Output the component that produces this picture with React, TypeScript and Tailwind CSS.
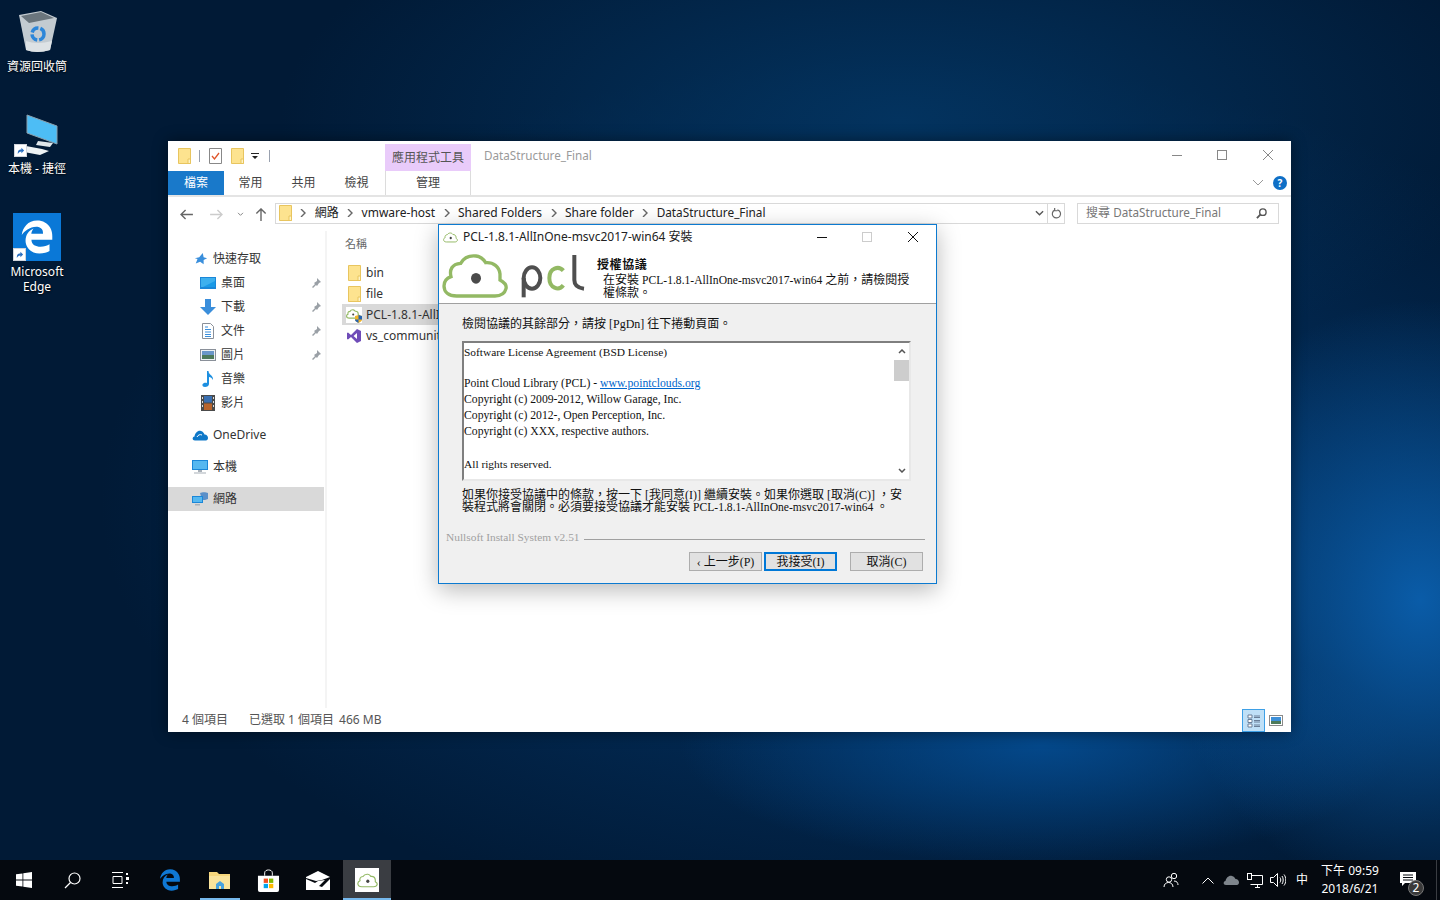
import React from 'react';
import { FaEdgeLegacy } from 'react-icons/fa6';

const UI_FONT = "font-['Noto_Sans','Noto_Sans_CJK_TC',sans-serif]";
const DLG_FONT = "font-['Liberation_Serif','Noto_Sans_CJK_TC',serif]";

const FolderIcon: React.FC<{ className?: string }> = ({ className = 'w-[13px] h-4' }) => (
    <svg viewBox="0 0 13 16" className={className}>
        <path d="M.5.5h12v15H.5z" fill="#fde38f" stroke="#e8c55f" />
        <path d="M10 11h2.500v4.500H10z" fill="#fff3c4" stroke="#e8c55f" />
    </svg>
);

const CloudPath = "M50 138C25 138 12 125 12 108 12 92 22 84 33 80 28 60 35 42 62 40 72 22 90 16 108 18 125 20 132 30 137 38 160 36 178 50 180 72 180 80 180 86 180 90 195 98 200 108 198 116 194 132 180 138 165 138Z";

const PclCloud: React.FC<{ className?: string; width?: number }> = ({ className, width = 14 }) => (
    <svg viewBox="4 10 202 136" className={className}>
        <path d={CloudPath} fill="none" stroke="#93b964" strokeWidth={width} />
        <ellipse cx="108" cy="85" rx="15" ry="16" fill="#444" />
    </svg>
);

const PinIcon = () => (
    <svg viewBox="0 0 12 12" className="w-3 h-3">
        <path d="M7 1l4 4-2 1-2 3-1-1-3 3-1-1 3-3-1-1 3-2z" fill="#9aa0a6" />
    </svg>
);

const ShortcutBadge = () => (
    <span className="absolute left-0 bottom-0 w-[13px] h-[13px] bg-white border border-gray-300 flex items-center justify-center">
        <svg viewBox="0 0 10 10" className="w-[9px] h-[9px]">
            <path d="M2 9c0-4 1-5 4-5V2l3 3-3 3V6C4 6 3 7 2 9z" fill="#2a6fc0" />
        </svg>
    </span>
);

const NavIcon: React.FC<{ kind: string }> = ({ kind }) => {
    switch (kind) {
        case 'star':
            return <svg viewBox="0 0 16 16" className="w-[14px] h-[14px]"><path d="M10 1l1 5 4 1-4 2 0 5-4-3-5 2 2-5-3-1 5-1z" fill="#3a8fdc" /></svg>;
        case 'desktop':
            return <svg viewBox="0 0 16 12" className="w-4 h-3"><rect width="16" height="12" fill="#1b87d8" /><path d="M1 1h14v9H1z" fill="#3db0ee" /><path d="M3 10h12V4z" fill="#1a9ae6" /></svg>;
        case 'download':
            return <svg viewBox="0 0 16 16" className="w-4 h-4"><path d="M5 0h6v8h5l-8 8-8-8h5z" fill="#3a8edb" /></svg>;
        case 'doc':
            return <svg viewBox="0 0 12 16" className="w-3 h-4"><path d="M.5.5h8l3 3v12H.5z" fill="#fff" stroke="#8a9099" /><path d="M3 4h3M3 6.500h6M3 9h6M3 11.500h6M3 13.500h6" stroke="#3a8edb" /></svg>;
        case 'picture':
            return <svg viewBox="0 0 16 12" className="w-4 h-3"><rect x=".5" y=".5" width="15" height="11" fill="#eef1f4" stroke="#8a9099" /><rect x="2" y="2" width="12" height="4" fill="#6a97c8" /><rect x="2" y="6" width="12" height="4" fill="#4d7a5a" /></svg>;
        case 'music':
            return <svg viewBox="0 0 12 16" className="w-3 h-4"><path d="M5 0h1.500c0 4 5 4 4.500 9-1-2-2.500-3-4-3v7c0 2-2 3-4 3-3 0-3.500-3-1-4 1-.5 2-.5 3 0z" fill="#1d8fe0" /></svg>;
        case 'video':
            return <svg viewBox="0 0 14 16" className="w-[14px] h-4"><rect width="14" height="16" fill="#4a4a4a" /><rect x="3" y="1" width="8" height="6.500" fill="#3a6fb0" /><rect x="3" y="8.500" width="8" height="6.500" fill="#b8642c" /><path d="M1 2h1v2H1zM1 6h1v2H1zM1 10h1v2H1zM12 2h1v2h-1zM12 6h1v2h-1zM12 10h1v2h-1z" fill="#ddd" /></svg>;
        case 'onedrive':
            return <svg viewBox="0 0 16 11" className="w-4 h-[11px]"><path d="M3 10.500C0 10.500 0 7 2.500 6.500 3 3 6 0 9 1c2 .5 3 2 3.500 3.500 2.500 0 3.500 2 3.500 3.500 0 1.500-1 2.500-2 2.500z" fill="#0f78c8" /><path d="M5 7c1-2 3-3 5-2" stroke="#fff" fill="none" /></svg>;
        case 'pc':
            return <svg viewBox="0 0 16 14" className="w-4 h-[14px]"><rect width="16" height="10" fill="#1b87d8" /><rect x="1" y="1" width="14" height="8" fill="#56b8f0" /><path d="M6 10h4v2H6zM2 12.500h12v1H2z" fill="#a8b0b8" /></svg>;
        default:
            return <svg viewBox="0 0 16 14" className="w-4 h-[14px]"><path d="M8 1c2-1 6-1 8 0v6c-2 1-4 1-6 1z" fill="#5a8fc8" /><rect y="4" width="11" height="7" fill="#1b87d8" /><rect x="1" y="5" width="9" height="5" fill="#56b8f0" /><path d="M3 12h5v1.500H3z" fill="#a8b0b8" /></svg>;
    }
};

const navItems = [
    { kind: 'desktop', label: '桌面', pin: true },
    { kind: 'download', label: '下載', pin: true },
    { kind: 'doc', label: '文件', pin: true },
    { kind: 'picture', label: '圖片', pin: true },
    { kind: 'music', label: '音樂', pin: false },
    { kind: 'video', label: '影片', pin: false },
];

const Sep = () => (
    <svg viewBox="0 0 6 8" className="w-[6px] h-2 mx-[8.400px]"><path d="M1 0l4 4-4 4" fill="none" stroke="#666" strokeWidth="1.400" /></svg>
);

const Explorer = () => (
    <div className={`absolute left-[168px] top-[141px] w-[1123px] h-[591px] bg-white flex flex-col text-[12px] shadow-[0_0_14px_rgba(0,0,0,0.45)] ${UI_FONT}`}>
        {/* title row */}
        <div className="h-[30px] flex items-start relative">
            <div className="flex items-center pt-[7px] pl-[10px]">
                <FolderIcon />
                <span className="w-px h-[12px] bg-gray-400 mx-2" />
                <svg viewBox="0 0 13 16" className="w-[13px] h-4 ml-[1px]"><path d="M.5.500h12v15H.5z" fill="#fff" stroke="#888" /><path d="M3 8l2.500 3L10 5" fill="none" stroke="#e0552a" strokeWidth="1.300" /></svg>
                <span className="w-[9px]" />
                <FolderIcon />
                <svg viewBox="0 0 8 8" className="w-2 h-2 ml-[7px]"><path d="M0 1h8v1H0zM1 4h6L4 7z" fill="#222" /></svg>
                <span className="w-px h-[12px] bg-gray-400 ml-[10px]" />
            </div>
            <div className="ml-[115px] mt-[3px] w-[86px] h-[27px] bg-[#e9cbfa] flex items-center justify-center text-[#555]">應用程式工具</div>
            <div className="ml-[13px] mt-[6px] text-[#9a9a9a] text-[11.700px]">DataStructure_Final</div>
            <div className="ml-auto flex items-start text-[#888]">
                <div className="w-[45px] h-[28px] flex items-center justify-center"><span className="w-[10px] h-px bg-[#888]" /></div>
                <div className="w-[45px] h-[28px] flex items-center justify-center"><span className="w-[10px] h-[10px] border border-[#888]" /></div>
                <div className="w-[47px] h-[28px] flex items-center justify-center">
                    <svg viewBox="0 0 10 10" className="w-[10px] h-[10px]"><path d="M0 0l10 10M10 0L0 10" stroke="#888" /></svg>
                </div>
            </div>
        </div>
        {/* ribbon tabs */}
        <div className="h-[24px] flex items-stretch border-b-2 border-[#e4e4e4] box-content relative">
            <div className="w-[56px] bg-[#1979ca] text-white flex items-center justify-center">檔案</div>
            {['常用', '共用', '檢視'].map(t => (
                <div key={t} className="flex items-center justify-center w-[53px] text-[#444]">{t}</div>
            ))}
            <div className="ml-[2px] w-[86px] flex items-center justify-center text-[#444] border-x border-[#dcdcdc]">管理</div>
            <div className="ml-auto flex items-center pr-[4px]">
                <svg viewBox="0 0 10 6" className="w-[10px] h-[6px] mr-[10px]"><path d="M0 0l5 5 5-5" fill="none" stroke="#999" /></svg>
                <span className="w-[14px] h-[14px] rounded-full bg-[#0f6fc6] text-white text-[10px] font-bold flex items-center justify-center">?</span>
            </div>
        </div>
        {/* address row */}
        <div className="h-[34px] flex items-center relative">
            <div className="flex items-center w-[107px] pl-[12px]">
                <svg viewBox="0 0 14 12" className="w-[13px] h-[11px]"><path d="M6 1L1 6l5 5M1 6h13" fill="none" stroke="#666" strokeWidth="1.500" /></svg>
                <svg viewBox="0 0 14 12" className="w-[13px] h-[11px] ml-[17px]"><path d="M8 1l5 5-5 5M13 6H0" fill="none" stroke="#ccc" strokeWidth="1.500" /></svg>
                <svg viewBox="0 0 8 6" className="w-[7px] h-[5px] ml-[14px]"><path d="M1 1l3 3 3-3" fill="none" stroke="#888" strokeWidth="1.200" /></svg>
                <svg viewBox="0 0 12 14" className="w-3 h-[13px] ml-[11px]"><path d="M1 6l5-5 5 5M6 1v13" fill="none" stroke="#666" strokeWidth="1.500" /></svg>
            </div>
            <div className="w-[790px] h-[21px] -mt-[2px] border border-[#d9d9d9] flex items-center pl-[3px] text-[#222]">
                <FolderIcon />
                <Sep />
                <span>網路</span><Sep />
                <span>vmware-host</span><Sep />
                <span>Shared Folders</span><Sep />
                <span>Share folder</span><Sep />
                <span className="text-[11.800px]">DataStructure_Final</span>
                <span className="ml-auto w-[14px] h-full flex items-center justify-center border-r border-[#d9d9d9] box-content pr-[1px]">
                    <svg viewBox="0 0 10 6" className="w-[9px] h-[6px]"><path d="M1 1l4 4 4-4" fill="none" stroke="#555" strokeWidth="1.500" /></svg>
                </span>
                <span className="w-[16px] h-full flex items-center justify-center">
                    <svg viewBox="0 0 12 12" className="w-[11px] h-[11px]"><path d="M7 2a4.500 4.500 0 1 1-3 .3M4 0v3h3" fill="none" stroke="#666" strokeWidth="1.300" /></svg>
                </span>
            </div>
            <div className="ml-[12px] w-[202px] h-[21px] -mt-[2px] border border-[#d9d9d9] flex items-center px-[8px] text-[#777]">
                <span>搜尋 <span className="text-[11.700px]">DataStructure_Final</span></span>
                <svg viewBox="0 0 12 12" className="w-[11px] h-[11px] ml-auto -translate-x-[3px]"><circle cx="7.500" cy="4.500" r="3.500" fill="none" stroke="#555" strokeWidth="1.500" /><path d="M5 7l-4 4" stroke="#555" strokeWidth="2" /></svg>
            </div>
        </div>
        {/* main */}
        <div className="flex-1 flex min-h-0">
            <div className="w-[156px] pt-[16px] text-[#333]">
                <div className="h-6 flex items-center pl-[26px] gap-[5px]"><NavIcon kind="star" /><span>快速存取</span></div>
                {navItems.map(it => (
                    <div key={it.label} className="h-6 flex items-center pl-[32px]">
                        <span className="w-4 flex justify-center"><NavIcon kind={it.kind} /></span>
                        <span className="ml-[5px]">{it.label}</span>
                        {it.pin && <span className="ml-auto mr-[2px]"><PinIcon /></span>}
                    </div>
                ))}
                <div className="h-6 mt-2 flex items-center pl-[24px] gap-[5px]"><NavIcon kind="onedrive" /><span>OneDrive</span></div>
                <div className="h-6 mt-2 flex items-center pl-[24px] gap-[5px]"><NavIcon kind="pc" /><span>本機</span></div>
                <div className="h-6 mt-2 flex items-center pl-[24px] gap-[5px] bg-[#d9d9d9]"><NavIcon kind="network" /><span>網路</span></div>
            </div>
            <div className="w-[2px] ml-[1px] bg-[#f4f4f4]" />
            <div className="flex-1 pl-[15px] pt-px text-[#333]">
                <div className="h-6 flex items-center pl-[3px] text-[#666] text-[11px]">名稱</div>
                <div className="mt-[6px] h-[21px] flex items-center pl-[6px] gap-[5px]"><FolderIcon /><span>bin</span></div>
                <div className="h-[21px] flex items-center pl-[6px] gap-[5px]"><FolderIcon /><span>file</span></div>
                {/* the installer dialog starts where these two rows are cut off */}
                <div className="h-[21px] w-[96px] overflow-hidden flex items-center pl-[4px] gap-[4px] bg-[#d9d9d9] whitespace-nowrap">
                    <span className="relative w-4 h-4 shrink-0 bg-white block">
                        <PclCloud className="w-[14px] h-[10px] mt-[2px]" width={16} />
                        <svg viewBox="0 0 8 9" className="absolute right-0 bottom-0 w-[7px] h-2"><path d="M0 1l4-1 4 1v4c0 2-2 3-4 4-2-1-4-2-4-4z" fill="#f0b429" /><path d="M4 0l4 1v4H4zM0 5h4v4C2 8 0 7 0 5z" fill="#2563b0" /></svg>
                    </span>
                    <span>PCL-1.8.1-AllInOne-msvc2017-win64.exe</span>
                </div>
                <div className="h-[21px] w-[96px] overflow-hidden flex items-center pl-[4px] gap-[4px] whitespace-nowrap">
                    <svg viewBox="0 0 16 16" className="w-4 h-4 shrink-0"><path d="M11 1l4 2v10l-4 2-6-6-3 2.500L1 11V5l1-.5L5 7zM11 5L7.500 8l3.500 3z" fill="#6f4cb8" fillRule="evenodd" /></svg>
                    <span>vs_community.exe</span>
                </div>
            </div>
        </div>
        {/* status */}
        <div className="h-[24px] flex items-center pl-[14px] text-[#555] relative">
            <span>4 個項目</span>
            <span className="ml-[21px]">已選取 1 個項目</span>
            <span className="ml-[5px]">466 MB</span>
            <div className="ml-auto flex items-end h-full pr-[8px]">
                <span className="w-[23px] h-[23px] bg-[#bfe0f7] border border-[#3ea0e6] flex items-center justify-center">
                    <svg viewBox="0 0 14 14" className="w-[14px] h-[14px]"><path d="M1 1h4v3H1zM1 5.500h4v3H1zM1 10h4v3H1z" fill="#fff" stroke="#6a7f98" /><path d="M7 2h6M7 3.500h6M7 6.500h6M7 8h6M7 11h6M7 12.500h6" stroke="#6a7f98" /></svg>
                </span>
                <span className="w-[14px] ml-[4px] h-[23px] flex items-center justify-center">
                    <svg viewBox="0 0 14 11" className="w-[14px] h-[11px]"><rect x=".5" y=".5" width="13" height="10" fill="#fff" stroke="#8a8a8a" /><rect x="2" y="2" width="10" height="4" fill="#3d8fd8" /><rect x="2" y="6" width="10" height="3" fill="#4d7a5a" /></svg>
                </span>
            </div>
        </div>
    </div>
);

const DlgButton: React.FC<{ children: React.ReactNode; primary?: boolean; className?: string }> = ({ children, primary, className = '' }) => (
    <div className={`w-[73px] h-[19px] bg-[#e1e1e1] flex items-center justify-center text-[12px] text-[#111] ${primary ? 'border-2 border-[#0078d7]' : 'border border-[#adadad]'} ${className}`}>{children}</div>
);

const licenseLines = [
    'Software License Agreement (BSD License)',
    '',
    null,
    'Copyright (c) 2009-2012, Willow Garage, Inc.',
    'Copyright (c) 2012-, Open Perception, Inc.',
    'Copyright (c) XXX, respective authors.',
    '',
    'All rights reserved.',
];

const InstallerDialog = () => (
    <div className={`absolute left-[438px] top-[224px] w-[499px] h-[360px] border border-[#0c7ad0] bg-[#f0f0f0] flex flex-col text-[12px] text-[#111] shadow-[0_6px_22px_rgba(0,0,0,0.28)] ${DLG_FONT}`}>
        <div className={`h-[24px] bg-white flex items-center pl-[4px] ${UI_FONT}`}>
            <PclCloud className="w-[15px] h-[11px]" width={13} />
            <span className="ml-[5px] text-[12px] text-[#222]">PCL-1.8.1-AllInOne-msvc2017-win64 安裝</span>
            <div className="ml-auto flex items-center">
                <div className="w-[45px] h-[24px] flex items-center justify-center"><span className="w-[10px] h-px bg-[#111]" /></div>
                <div className="w-[45px] h-[24px] flex items-center justify-center"><span className="w-[10px] h-[10px] border border-[#ccc]" /></div>
                <div className="w-[47px] h-[24px] flex items-center justify-center">
                    <svg viewBox="0 0 10 10" className="w-[10px] h-[10px]"><path d="M0 0l10 10M10 0L0 10" stroke="#111" /></svg>
                </div>
            </div>
        </div>
        <div className="h-[54px] bg-white border-b border-[#a0a0a0] box-content flex items-start relative">
            <svg viewBox="0 0 450 150" className="w-[150px] h-[50px] ml-px mt-px">
                <path d={CloudPath} fill="none" stroke="#93b964" strokeWidth="10" />
                <ellipse cx="108" cy="85" rx="15" ry="16" fill="#4a4a4a" />
                <path d="M251 142V84" stroke="#4f4f4f" strokeWidth="12" fill="none" />
                <ellipse cx="276" cy="84" rx="25" ry="32" stroke="#4f4f4f" strokeWidth="12" fill="none" />
                <path d="M370 62C356 46 328 54 328 84 328 114 356 124 370 106" stroke="#93b964" strokeWidth="12" fill="none" />
                <path d="M403 15V90C403 108 415 114 432 116" stroke="#4f4f4f" strokeWidth="12" fill="none" />
            </svg>
            <div className="absolute left-[158px] top-[9px] whitespace-nowrap">
                <div className="font-bold leading-[14px] tracking-[0.6px]">授權協議</div>
                <div className="ml-[6px] mt-[2px] leading-[12px]">
                    <div>在安裝 <span className="text-[11.600px]">PCL-1.8.1-AllInOne-msvc2017-win64</span> 之前，請檢閱授</div>
                    <div>權條款。</div>
                </div>
            </div>
        </div>
        <div className="flex-1 flex flex-col px-[23px] pt-[13px] relative">
            <div className="leading-[14px] whitespace-nowrap">檢閱協議的其餘部分，請按 [PgDn] 往下捲動頁面。</div>
            <div className="mt-[10px] w-[449px] h-[140px] bg-white border-2 border-t-[#7f7f7f] border-l-[#7f7f7f] border-r-[#e8e8e8] border-b-[#e8e8e8] flex box-border">
                <div className="flex-1 pt-px leading-[16px] whitespace-nowrap text-[11.700px]">
                    {licenseLines.map((l, i) => l === null ? (
                        <div key={i} className="h-4">Point Cloud Library (PCL) - <span className="text-[#0066cc] underline">www.pointclouds.org</span></div>
                    ) : (
                        <div key={i} className={`h-4 ${i === 0 || i === 7 ? 'text-[11.400px]' : ''}`}>{l}</div>
                    ))}
                </div>
                <div className="w-[15px] flex flex-col items-center">
                    <div className="h-[17px] flex items-center justify-center">
                        <svg viewBox="0 0 8 5" className="w-2 h-[5px]"><path d="M1 4l3-3 3 3" fill="none" stroke="#555" strokeWidth="1.500" /></svg>
                    </div>
                    <div className="w-full h-[21px] bg-[#cdcdcd]" />
                    <div className="flex-1" />
                    <div className="h-[17px] flex items-center justify-center">
                        <svg viewBox="0 0 8 5" className="w-2 h-[5px]"><path d="M1 1l3 3 3-3" fill="none" stroke="#555" strokeWidth="1.500" /></svg>
                    </div>
                </div>
            </div>
            <div className="mt-2 leading-[12px] whitespace-nowrap">
                <div>如果你接受協議中的條款，按一下 [我同意(I)] 繼續安裝。如果你選取 [取消(C)] ，安</div>
                <div>裝程式將會關閉。必須要接受協議才能安裝 <span className="text-[11.600px]">PCL-1.8.1-AllInOne-msvc2017-win64</span> 。</div>
            </div>
            <div className="-ml-[16px] mr-[-12px] mt-[15px] flex items-center text-[#a0a0a0] whitespace-nowrap text-[11.400px]">
                <span>Nullsoft Install System v2.51</span>
                <span className="flex-1 h-px bg-[#a0a0a0] ml-[4px] mt-[4px]" />
            </div>
            <div className="flex justify-end mt-[6px] -mr-[10px]">
                <DlgButton>‹ 上一步(P)</DlgButton>
                <DlgButton primary className="ml-[2px]">我接受(I)</DlgButton>
                <DlgButton className="ml-[13px]">取消(C)</DlgButton>
            </div>
        </div>
    </div>
);

const DesktopIcon: React.FC<{ children: React.ReactNode; label: React.ReactNode; pos: string }> = ({ children, label, pos }) => (
    <div className={`absolute left-0 w-[74px] flex flex-col items-center text-white text-[12px] leading-[15px] text-center [text-shadow:0_1px_2px_#000] ${UI_FONT} ${pos}`}>
        {children}
        {label}
    </div>
);

const Taskbar = () => (
    <div className={`absolute left-0 right-0 bottom-0 h-[40px] bg-[#05090f] flex items-stretch text-white ${UI_FONT}`}>
        <div className="w-[48px] flex items-center justify-center">
            <svg viewBox="0 0 16 16" className="w-4 h-4"><path d="M0 2.300L6.500 1.400v6.200H0zM7.300 1.300L16 0v7.600H7.300zM0 8.400h6.500v6.200L0 13.700zM7.300 8.400H16V16l-8.700-1.300z" fill="#fff" /></svg>
        </div>
        <div className="w-[48px] flex items-center justify-center">
            <svg viewBox="0 0 17 17" className="w-[17px] h-[17px]"><circle cx="10.500" cy="6.500" r="5.500" fill="none" stroke="#fff" strokeWidth="1.200" /><path d="M6.500 10.500L1 16" stroke="#fff" strokeWidth="1.300" /></svg>
        </div>
        <div className="w-[48px] flex items-center justify-center">
            <svg viewBox="0 0 17 16" className="w-[17px] h-4"><path d="M0 .5h11M0 15.500h11M1 4.500h9v7H1z" fill="none" stroke="#fff" /><path d="M14 1h2v2h-2zM14 5h3v3h-3zM14 10h2v2h-2z" fill="#fff" /></svg>
        </div>
        <div className="w-[52px] flex items-center justify-center"><FaEdgeLegacy className="w-[22px] h-[22px] text-[#0f78d4]" /></div>
        <div className="w-[48px] flex items-center justify-center relative">
            <svg viewBox="0 0 22 19" className="w-[22px] h-[19px]"><path d="M0 1h8l2 2h11v15H0z" fill="#f7d77c" /><path d="M0 5h21v13H0z" fill="#fbe49c" /><path d="M7 18v-5l4-3 4 3v5h-3v-3h-2v3z" fill="#4aa3df" /></svg>
            <span className="absolute left-[4px] right-[4px] bottom-0 h-[2px] bg-[#76b9ed]" />
        </div>
        <div className="w-[49px] flex items-center justify-center">
            <svg viewBox="0 0 24 24" className="w-[23px] h-[23px]"><path d="M8 7V4c0-4 8-4 8 0v3" fill="none" stroke="#fff" /><path d="M1 7h22v15a2 2 0 0 1-2 2H3a2 2 0 0 1-2-2z" fill="#fff" /><path d="M7 10h4.500v4.500H7z" fill="#f25022" /><path d="M12.500 10H17v4.500h-4.500z" fill="#7fba00" /><path d="M7 15.500h4.500V20H7z" fill="#00a4ef" /><path d="M12.500 15.500H17V20h-4.500z" fill="#ffb900" /></svg>
        </div>
        <div className="w-[50px] flex items-center justify-center">
            <svg viewBox="0 0 24 19" className="w-6 h-[19px]"><path d="M0 6l12-6 12 6-8 3-6 1-10-3z" fill="#fff" /><path d="M0 8l9 4 3-2 7-1-6 6 3 1 8-8v11H0z" fill="#fff" /></svg>
        </div>
        <div className="w-[48px] bg-[#3a3d42] flex items-center justify-center relative">
            <span className="w-6 h-6 bg-white flex items-center justify-center"><PclCloud className="w-[21px] h-[15px]" width={11} /></span>
            <span className="absolute left-0 right-0 bottom-0 h-[2px] bg-[#76b9ed]" />
        </div>
        <div className="ml-auto flex items-center text-[12px] leading-[18px] h-full">
            <svg viewBox="0 0 16 16" className="w-4 h-4 mr-[23px]"><circle cx="11" cy="4" r="2.700" fill="none" stroke="#fff" /><circle cx="6" cy="7.500" r="2.700" fill="none" stroke="#fff" /><path d="M1 15c0-6 9-6 9 0M11 9c3 0 4 2 4 4" fill="none" stroke="#fff" /></svg>
            <svg viewBox="0 0 12 7" className="w-3 h-[7px] mr-[9px]"><path d="M.5 6.500L6 1l5.500 5.500" fill="none" stroke="#fff" /></svg>
            <svg viewBox="0 0 16 10" className="w-4 h-[10px] mr-[8px]"><path d="M3 10C0 10 0 6.500 2.500 6 3 3 6 0 9 1c2 .5 3 2 3.500 3 2.500 0 3.500 2 3.500 3.500S15 10 14 10z" fill="#7e858c" /></svg>
            <svg viewBox="0 0 16 15" className="w-4 h-[15px] mr-[7px]"><path d="M3.500 2.500h12v9h-12M8 14.500h5M10.500 11.500v3" fill="none" stroke="#fff" /><rect x=".5" y=".5" width="4" height="6" fill="#05090f" stroke="#fff" /></svg>
            <svg viewBox="0 0 16 14" className="w-4 h-[14px] mr-[10px]"><path d="M.5 4.500h3l4-4v13l-4-4h-3z" fill="none" stroke="#fff" /><path d="M10 4.500c1 1.500 1 3.500 0 5M12 3c1.600 2 1.600 6 0 8M14 1.500c2.400 3 2.400 8 0 11" fill="none" stroke="#fff" /></svg>
            <span className="w-[12px] text-[12px] mr-[11px]">中</span>
            <div className="w-[62px] mr-[3px] text-center whitespace-nowrap"><div>下午 09:59</div><div>2018/6/21</div></div>
            <div className="relative w-[48px] h-full flex items-center justify-center mr-[4px]">
                <svg viewBox="0 0 16 16" className="w-4 h-4 -mt-[2px]"><path d="M0 1h16v11H5l-3 3v-3H0z" fill="#fff" /><path d="M3 4h10M3 6.500h10M3 9h10" stroke="#05090f" /></svg>
                <span className="absolute left-[24px] top-[20px] w-4 h-4 rounded-full bg-[#3a3a3a] border border-[#777] flex items-center justify-center text-[12px] leading-none">2</span>
            </div>
            <span className="w-px h-full bg-[#3a3d42]" />
            <span className="w-[3px]" />
        </div>
    </div>
);

export default function App() {
    return (
        <div className="relative w-[1440px] h-[900px] overflow-hidden bg-[#011a36] bg-[radial-gradient(ellipse_260px_300px_at_1420px_600px,#0a5ca8_0%,rgba(4,70,130,0)_100%),radial-gradient(ellipse_360px_120px_at_1040px_745px,#04488a_0%,rgba(2,40,80,0)_100%),radial-gradient(ellipse_620px_260px_at_900px_120px,#03335f_0%,rgba(3,45,85,0)_100%),radial-gradient(ellipse_800px_440px_at_900px_500px,#033a72_0%,rgba(2,40,80,0)_100%)]">
            <DesktopIcon pos="top-[8px]" label={<span className="mt-[7px]">資源回收筒</span>}>
                <svg viewBox="0 0 41 44" className="w-[41px] h-[44px]">
                    <path d="M2 7l7 35q11 4 24 0l7-32L24 3z" fill="#c3cbd1" />
                    <path d="M9 33q11 4 26 0l-2 9q-13 4-24 0z" fill="#dde2e5" />
                    <path d="M4 8L24 4l13 6-25 5z" fill="#6a757d" />
                    <circle cx="21" cy="26" r="6" fill="none" stroke="#2c86d9" strokeWidth="3.500" strokeDasharray="8 2" />
                </svg>
            </DesktopIcon>
            <DesktopIcon pos="top-[113px]" label={<span className="mt-[4px]">本機 - 捷徑</span>}>
                <div className="relative w-[46px] h-[44px]">
                    <svg viewBox="0 0 46 44" className="w-[46px] h-[44px]">
                        <path d="M13 2l30 11v18L13 20z" fill="#4dbdf5" stroke="#8aa0ad" />
                        <path d="M24 28l15 2-3 4-14-2z" fill="#dfe6ea" />
                        <path d="M12 33l16 3 7 2-9 4-16-3z" fill="#eef2f4" />
                    </svg>
                    <ShortcutBadge />
                </div>
            </DesktopIcon>
            <DesktopIcon pos="top-[213px]" label={<span className="mt-[3px]">Microsoft<br />Edge</span>}>
                <div className="relative w-[48px] h-[48px] bg-[#0a78d7] flex items-center justify-center">
                    <FaEdgeLegacy className="w-[34px] h-[34px] text-white" />
                    <ShortcutBadge />
                </div>
            </DesktopIcon>
            <Explorer />
            <InstallerDialog />
            <Taskbar />
        </div>
    );
}
